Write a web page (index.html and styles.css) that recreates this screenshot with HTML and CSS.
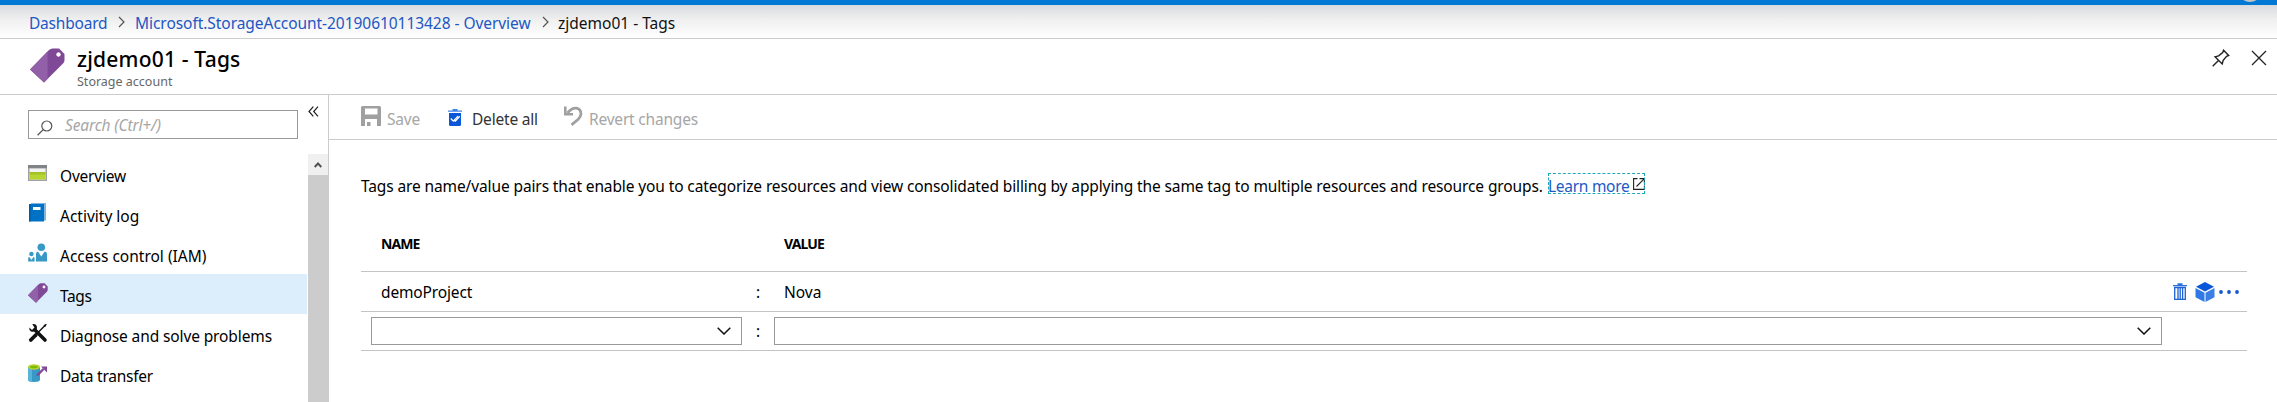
FILE: index.html
```
<!DOCTYPE html>
<html lang="en">
<head>
<meta charset="utf-8">
<title>zjdemo01 - Tags</title>
<link rel="stylesheet" href="styles.css">
</head>
<body>
<div class="topbar"><span class="avatar"></span></div>
<nav class="crumbs">
  <a class="crumb crumb-dashboard">Dashboard</a>
  <svg class="crumb-sep" width="7" height="12" viewBox="0 0 7 12"><path d="M1 1l5 5-5 5" fill="none" stroke="#555" stroke-width="1.2"/></svg>
  <a class="crumb crumb-deployment">Microsoft.StorageAccount-20190610113428 - Overview</a>
  <svg class="crumb-sep" width="7" height="12" viewBox="0 0 7 12"><path d="M1 1l5 5-5 5" fill="none" stroke="#555" stroke-width="1.2"/></svg>
  <span class="crumb crumb-current">zjdemo01 - Tags</span>
</nav>
<header class="header">
  <svg class="header-icon" width="35" height="35" viewBox="0 0 35 35"><path d="M0 21.500L19 2Q20.500.5 22.500.5H29L34.500 6V12Q34.500 14 33 15.500L14 34.500Z" fill="#804998"/><path d="M0 21.500L17.500 3.500V31L14 34.500Z" fill="#9160a8"/><circle cx="28.500" cy="6.500" r="2.700" fill="#fff" stroke="#68217a" stroke-width=".8"/></svg>
  <div class="titles">
    <h1 class="title">zjdemo01 - Tags</h1>
    <div class="subtitle">Storage account</div>
  </div>
  <div class="window-actions">
    <svg width="18" height="18" viewBox="0 0 18 18"><path d="M.7 17.300L6.500 11.500M3 7.800L10.200 15L11.200 11.300L14.600 7.400L16.700 6.500L11.600 1.200L10.700 3.500L6.600 6.800Z" fill="none" stroke="#222" stroke-width="1.400"/></svg>
    <svg width="16" height="16" viewBox="0 0 16 16"><path d="M1 1l14 14M15 1L1 15" stroke="#222" stroke-width="1.300"/></svg>
  </div>
</header>
<div class="body">
  <aside class="side">
    <div class="search-row">
      <div class="search">
        <svg width="16" height="16" viewBox="0 0 16 16"><circle cx="9.800" cy="6" r="5" fill="none" stroke="#555" stroke-width="1.200"/><path d="M6.200 9.600L.6 15.300" stroke="#555" stroke-width="1.300"/></svg>
        <span class="placeholder">Search (Ctrl+/)</span>
      </div>
      <svg class="collapse" width="11" height="11" viewBox="0 0 11 11"><path d="M5.300.7L1 5.500l4.300 4.800M10 .7L5.700 5.500 10 10.300" fill="none" stroke="#222" stroke-width="1.200"/></svg>
    </div>
    <div class="menu-area">
      <div class="menu">
        <div class="item"><svg class="ico" width="20" height="20" viewBox="0 0 20 20"><path d="M0 2h19v16H0z" fill="#a0a1a2"/><path d="M0 2h19v3H0z" fill="#828386"/><path d="M1.500 5.500h16v11h-16z" fill="#f2f2f2"/><path d="M1.500 9h16v7.500h-16z" fill="#b8d432"/><path d="M1.500 9h16v2.500h-16z" fill="#a3c226"/></svg><span class="label l-overview">Overview</span></div>
        <div class="item"><svg class="ico" width="20" height="20" viewBox="0 0 20 20"><path d="M3 0h15v17.500H3z" fill="#7fb5de"/><path d="M1 1h15v17.500H1z" fill="#0072c6"/><path d="M1 1h1.500v17.500H1z" fill="#005ba1"/><path d="M5 4h7.500v3H5z" fill="#fff"/></svg><span class="label l-activity">Activity log</span></div>
        <div class="item"><svg class="ico" width="20" height="20" viewBox="0 0 20 20"><circle cx="13.300" cy="4.300" r="3.800" fill="#3999c6"/><path d="M8 18.500V11q0-2.500 2-2.500l3.300 5 3.300-5q2.400 0 2.400 2.500v7.500z" fill="#3999c6"/><circle cx="3.400" cy="11" r="2.200" fill="#3999c6"/><path d="M.2 18.500v-3.200q0-1.300 1.200-1.300l2 3 2-3q1.200 0 1.200 1.300v3.200z" fill="#3999c6"/></svg><span class="label l-access">Access control (IAM)</span></div>
        <div class="item selected"><svg class="ico" width="20" height="20" viewBox="0 0 35 35"><path d="M0 21.500L19 2Q20.500.5 22.500.5H29L34.500 6V12Q34.500 14 33 15.500L14 34.500Z" fill="#804998"/><path d="M0 21.500L17.500 3.500V31L14 34.500Z" fill="#9160a8"/><circle cx="28" cy="7" r="2.500" fill="#fff"/></svg><span class="label l-tags">Tags</span></div>
        <div class="item"><svg class="ico" width="20" height="20" viewBox="0 0 20 20"><path d="M2.500 17L17 2.500" stroke="#111" stroke-width="1.500"/><path d="M2.800 17L7.800 12" stroke="#111" stroke-width="3.800" stroke-linecap="round"/><path d="M7 7l10 10" stroke="#111" stroke-width="3.600" stroke-linecap="round"/><path d="M1.200 4.500L4 7l2.500-2.500L4.300 1.300Q7.500.4 8.600 2.800 9.800 5.700 7.600 7.700 5.500 9.400 3 8.500 1 7.400 1.200 4.500Z" fill="#111"/><path d="M15.500 2.300l2.500-1.500.7.700-1.500 2.500z" fill="#111"/></svg><span class="label l-diagnose">Diagnose and solve problems</span></div>
        <div class="item"><svg class="ico" width="20" height="20" viewBox="0 0 20 20"><path d="M0 4v12.500q0 2.500 6 2.500t6-2.500V4z" fill="#3999c6"/><path d="M0 4v12.500q0 2.200 4 2.400V4z" fill="#59b4d9"/><ellipse cx="6" cy="4" rx="6" ry="2.700" fill="#b8d432"/><ellipse cx="6" cy="4" rx="4" ry="1.300" fill="#7fba00"/><path d="M9 12.500L15.500 6" stroke="#804998" stroke-width="2.400"/><path d="M13 3.500h6v6z" fill="#804998"/></svg><span class="label l-data">Data transfer</span></div>
      </div>
      <div class="scroll"><div class="scroll-up"><svg width="8" height="6" viewBox="0 0 8 6"><path d="M.7 5L4 1.500 7.300 5" fill="none" stroke="#505050" stroke-width="1.900"/></svg></div><div class="thumb"></div></div>
    </div>
  </aside>
  <main class="main">
    <div class="toolbar">
      <svg class="t-save" width="20" height="20" viewBox="0 0 20 20"><path fill-rule="evenodd" d="M1.500 0H18.500Q20 0 20 1.500V20H16V13H4V20H0V1.500Q0 0 1.500 0ZM4 2.500V8.500H16.500V2.500Z" fill="#a0a0a0"/><path d="M6 16h3.500v4H6z" fill="#a0a0a0"/></svg>
      <span class="tool tool-save off">Save</span>
      <svg class="t-del" width="14" height="17" viewBox="0 0 14 17"><path d="M0 1.500h14v1.300H0z M4.500 0h5v1.500h-5z" fill="#3f83ea"/><path d="M1 4h12v11.500q0 1.500-1.500 1.500h-9Q1 17 1 15.500z" fill="#0a56d8"/><path d="M2.800 9.500l2.500 2.600 4.700-5M6.500 11.600l.8.600 4.500-5" fill="none" stroke="#fff" stroke-width="1.300"/></svg>
      <span class="tool tool-del">Delete all</span>
      <svg class="t-rev" width="19" height="20" viewBox="0 0 19 20"><path d="M3.500 7Q8 1.600 12.500 2.200 17 3.200 17 8.200 16.700 11 14 13.500L7.500 18.800" fill="none" stroke="#a0a0a0" stroke-width="2.800"/><path d="M1.300.5V8.200H9" fill="none" stroke="#a0a0a0" stroke-width="2.600"/></svg>
      <span class="tool tool-rev off">Revert changes</span>
    </div>
    <p class="intro"><span class="intro-text">Tags are name/value pairs that enable you to categorize resources and view consolidated billing by applying the same tag to multiple resources and resource groups.</span><a class="learn"><span>Learn more</span><svg width="12" height="12" viewBox="0 0 12 12"><path d="M4.500.6H.6v10.800h10.800V7.500M6.500.6h4.900v4.900M11.400.6L3.500 8.500" fill="none" stroke="#222" stroke-width="1.100"/></svg></a></p>
    <div class="table">
      <div class="row head"><span class="c-name">NAME</span><span class="c-colon"></span><span class="c-value">VALUE</span></div>
      <div class="row data"><span class="c-name d-name">demoProject</span><span class="c-colon">:</span><span class="c-value d-value">Nova</span>
        <div class="row-actions">
          <svg width="14" height="18" viewBox="0 0 14 18"><path d="M0 2h14v1.300H0zM4.500.3h5V2h-5z" fill="#2d70dc"/><path d="M1.700 4.500v11.800h10.600V4.500zM5 5v11M7.200 5v11M9.600 5v11" fill="none" stroke="#1f62d5" stroke-width="1.300"/></svg>
          <svg class="cube" width="20" height="20" viewBox="0 0 20 20"><path d="M10 0l9 4.800-9 4.700-9-4.700z" fill="#0a56d8"/><path d="M.5 6l9 4.800V20l-9-4.800z" fill="#2f78e5"/><path d="M19.500 6l-9 4.800V20l9-4.800z" fill="#3b7fe5"/></svg>
          <svg width="20" height="4" viewBox="0 0 20 4"><circle cx="2" cy="2" r="1.900" fill="#1558cc"/><circle cx="10" cy="2" r="1.900" fill="#1558cc"/><circle cx="18" cy="2" r="1.900" fill="#1558cc"/></svg>
        </div>
      </div>
      <div class="row entry">
        <div class="combo combo-name"><svg width="14" height="8" viewBox="0 0 14 8"><path d="M.7.8L7 7 13.300.8" fill="none" stroke="#111" stroke-width="1.500"/></svg></div>
        <span class="c-colon">:</span>
        <div class="combo combo-value"><svg width="14" height="8" viewBox="0 0 14 8"><path d="M.7.8L7 7 13.300.8" fill="none" stroke="#111" stroke-width="1.500"/></svg></div>
      </div>
    </div>
  </main>
</div>
</body>
</html>
```
FILE: styles.css
```
* { box-sizing: border-box; }
body { margin: 0; width: 2277px; height: 402px; overflow: hidden; background: #fff; color: #000; font: 15.5px/20px "Noto Sans", "Open Sans", sans-serif; white-space: nowrap; display: flex; flex-direction: column; }
svg { display: block; flex: none; }
.topbar { height: 5px; background: #0078d4; overflow: hidden; flex: none; padding-left: 2238px; }
.avatar { display: block; width: 24px; height: 24px; margin-top: -22px; border-radius: 50%; background: #c0c4c4; }
.crumbs { height: 34px; flex: none; display: flex; align-items: center; padding: 2px 0 0 29px; border-bottom: 1px solid #ccc; background: linear-gradient(#d9dade, #f0f0f1 45%, #fff); }
.crumb { color: #2257c4; }
.crumb-current { color: #111; margin-left: -1px; }
.crumb-dashboard { width: 89px; letter-spacing: -0.2px; }
.crumb-sep { margin: -2px 10px 0 0; }
.crumb-deployment { width: 407px; letter-spacing: -0.05px; }
.header { height: 56px; flex: none; display: flex; border-bottom: 1px solid #ccc; padding: 9px 10px 0 30px; }
.titles { margin-left: 12px; flex: 1; }
.title { margin: 0; font-size: 21px; line-height: 22px; font-weight: 500; letter-spacing: 0.2px; }
.subtitle { font-size: 12.5px; line-height: 16px; color: #666; margin-top: 4px; }
.window-actions { display: flex; align-items: center; gap: 21px; height: 20px; }
.body { display: flex; flex: 1; min-height: 0; }
.side { width: 329px; border-right: 1px solid #ccc; display: flex; flex-direction: column; }
.search-row { height: 59px; flex: none; padding: 15px 0 0 28px; display: flex; gap: 10px; }
.search { width: 270px; height: 29px; border: 1px solid #999; display: flex; padding-left: 8px; }
.search svg { margin-top: 9px; }
.collapse { margin-top: -4px; }
.placeholder { margin: 4px 0 0 12px; font-style: italic; color: #a6a6a6; letter-spacing: -0.15px; }
.menu-area { flex: 1; display: flex; min-height: 0; }
.menu { width: 307px; overflow: hidden; margin-right: 1px; }
.item { height: 40px; padding-left: 28px; display: flex; align-items: center; gap: 12px; }
.selected { background: #dceefc; }
.ico { margin-top: -2px; }
.label { padding-top: 4px; }
.l-overview { letter-spacing: -0.2px; }
.l-tags { letter-spacing: -0.4px; }
.l-diagnose { letter-spacing: -0.12px; }
.l-data { letter-spacing: -0.25px; }
.scroll { width: 20px; background: #ccc; }
.scroll-up { height: 21px; background: #f0f0f0; display: flex; align-items: center; justify-content: center; }
.main { flex: 1; min-width: 0; }
.toolbar { height: 45px; border-bottom: 1px solid #ccc; display: flex; align-items: center; padding-left: 32px; }
.tool { color: #333; padding-top: 3px; letter-spacing: -0.2px; }
.toolbar .off { color: #a6a6a6; }
.tool-save { margin-left: 6px; width: 61px; }
.tool-del { margin-left: 10px; width: 92px; }
.tool-rev { margin-left: 6px; }
.t-save, .t-rev { margin-top: -2px; }
.intro { margin: 33px 0 0 32px; height: 20px; display: flex; }
.intro-text { width: 1187px; padding-top: 3px; letter-spacing: -0.117px; }
.learn { width: 97px; height: 21px; display: flex; justify-content: space-between; outline: 1px dashed #20a8b8; outline-offset: -1px; color: #2257c4; letter-spacing: -0.28px; }
.learn span { padding-top: 3px; line-height: 20px; height: 23px; }
.learn svg { margin-top: 5px; }
.table { margin: 24px 30px 0 32px; }
.row { display: flex; align-items: center; height: 40px; border-bottom: 1px solid #c4c4c4; }
.head { height: 55px; font-size: 14px; font-weight: bold; padding-bottom: 1px; letter-spacing: -0.9px; }
.c-name { width: 390px; padding-left: 20px; }
.c-colon { width: 23px; padding-left: 5px; }
.c-value { flex: 1; padding-left: 10px; }
.d-name { letter-spacing: -0.15px; }
.row-actions { display: flex; align-items: center; width: 74px; gap: 4px; }
.cube { margin-left: 4px; }
.entry { height: 39px; padding-left: 10px; }
.combo { height: 28px; border: 1px solid #999; display: flex; align-items: center; justify-content: flex-end; padding-right: 10px; }
.combo-name { width: 371px; margin-right: 9px; }
.combo-value { width: 1388px; }
```
